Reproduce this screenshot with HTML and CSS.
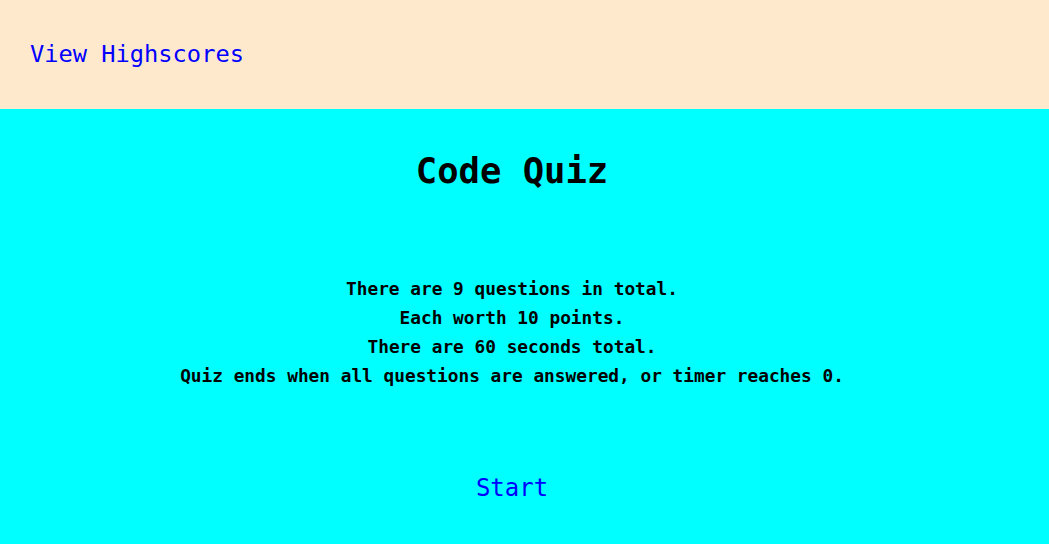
FILE: index.html
```html
<!DOCTYPE html>
<html>
<head>
<meta charset="utf-8">
<link rel="stylesheet" href="styles.css">
</head>
<body>
<header class="top">
  <a class="hs-link" href="#">View Highscores</a>
</header>
<main class="quiz">
  <h1 class="title">Code Quiz</h1>
  <div class="rules">
    <p>There are 9 questions in total.</p>
    <p>Each worth 10 points.</p>
    <p>There are 60 seconds total.</p>
    <p>Quiz ends when all questions are answered, or timer reaches 0.</p>
  </div>
  <a class="start" href="#">Start</a>
</main>
</body>
</html>
```
FILE: styles.css
```css
html, body {
  margin: 0;
  padding: 0;
  height: 100%;
}
body {
  font-family: "DejaVu Sans Mono", monospace;
  background: #00ffff;
  display: flex;
  flex-direction: column;
}
.top {
  background: #ffe9cd;
  height: 109px;
  flex-shrink: 0;
  display: flex;
  align-items: center;
  padding-left: 30px;
}
.hs-link {
  color: #0000ff;
  text-decoration: none;
  font-size: 23.7px;
  margin-bottom: 2px;
}
.quiz {
  flex: 1;
  background: #00ffff;
  display: flex;
  flex-direction: column;
  align-items: center;
  padding-right: 25px;
}
.title {
  font-size: 35.5px;
  font-weight: bold;
  margin: 41px 0 0;
  line-height: 42px;
}
.rules {
  margin-top: 82px;
  text-align: center;
  font-weight: bold;
  font-size: 17.8px;
}
.rules p {
  margin: 0;
  line-height: 29px;
}
.start {
  margin-top: 84px;
  color: #0000ff;
  text-decoration: none;
  font-size: 24px;
}
```
